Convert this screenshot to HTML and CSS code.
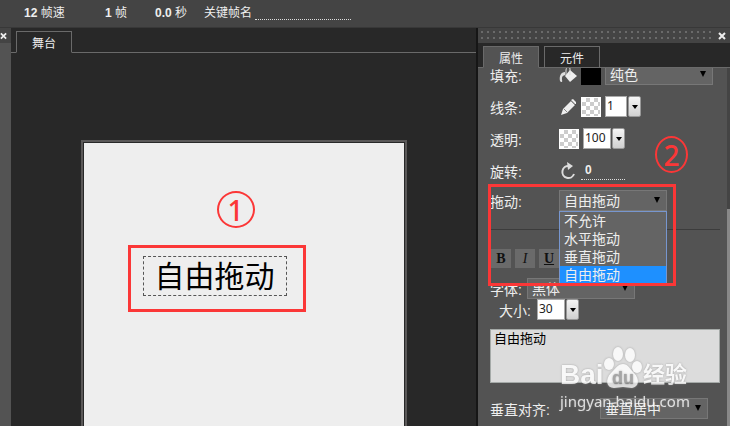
FILE: index.html
```html
<!DOCTYPE html>
<html lang="zh-CN">
<head>
    <meta charset="UTF-8">
    <meta name="viewport" content="width=device-width, initial-scale=1.0">
    <title>舞台</title>
    <link rel="stylesheet" href="styles.css">
</head>
<body>
    <header class="timeline-bar">
        <p><b>12</b> 帧速</p>
        <p><b>1</b> 帧</p>
        <p><b>0.0</b> 秒</p>
        <div class="frame-name">
            <label for="frameName">关键帧名</label>
            <input id="frameName" type="text">
        </div>
    </header>

    <div class="workspace">
        <aside class="side-strip">
            <button class="close-button" aria-label="关闭">
                <svg width="8" height="8" viewBox="0 0 8 8"><path d="M1 1l6 6M7 1L1 7"/></svg>
            </button>
        </aside>

        <main class="stage">
            <nav class="tabs stage-tabs">
                <button class="tab">舞台</button>
            </nav>
            <div class="paper">
                <div class="text-object">自由拖动</div>
                <div class="mark-box mark-text"></div>
                <div class="mark-circle mark-one">1</div>
            </div>
        </main>

        <aside class="panel">
            <div class="panel-handle">
                <button class="close-button" aria-label="关闭">
                    <svg width="8" height="8" viewBox="0 0 8 8"><path d="M1 1l6 6M7 1L1 7"/></svg>
                </button>
            </div>
            <nav class="tabs panel-tabs">
                <button class="tab active">属性</button>
                <button class="tab">元件</button>
            </nav>

            <div class="panel-body">
                <form class="properties">
                    <div class="row">
                        <label for="fill">填充:</label>
                        <svg class="icon" width="18" height="18" viewBox="0 0 18 18">
                            <path d="M11 4l7 6-7 6-5-6z" fill="#eee"/>
                            <path d="M11 9V3c0-3-4-2-4 1v5" fill="none" stroke="#ddd"/>
                            <path d="M6 6C2 6 0 10 1 15c1 2 3 1 2-1 0-3 0-4 3-5z" fill="#ddd"/>
                        </svg>
                        <span class="swatch black"></span>
                        <div class="select">
                            <select id="fill"><option>纯色</option></select>
                        </div>
                    </div>
                    <div class="row">
                        <label for="line">线条:</label>
                        <svg class="icon" width="18" height="18" viewBox="0 0 18 18">
                            <path d="M2 17l2-6 8-8 4 4-8 8zM12 2l2-1 3 3v2l-1 0z" fill="#eee"/>
                            <path d="M12 3l4 4M5 11l3 3" stroke="#888" stroke-width="1"/>
                        </svg>
                        <span class="swatch checker"></span>
                        <div class="combo">
                            <input id="line" class="short" type="text" value="1">
                            <button type="button" aria-label="线条"></button>
                        </div>
                    </div>
                    <div class="row">
                        <label for="alpha">透明:</label>
                        <span class="swatch checker"></span>
                        <div class="combo">
                            <input id="alpha" type="text" value="100">
                            <button type="button" aria-label="透明"></button>
                        </div>
                    </div>
                    <div class="row tight">
                        <label for="rotate">旋转:</label>
                        <svg class="icon" width="18" height="18" viewBox="0 0 18 18">
                            <path d="M10 4A6 6 0 1 0 15 12" fill="none" stroke="#ddd" stroke-width="2"/>
                            <path d="M8 0l6 4-5 4z" fill="#ddd"/>
                        </svg>
                        <input id="rotate" class="rotate" type="text" value="0">
                    </div>
                    <div class="row drag-row">
                        <label for="drag">拖动:</label>
                        <div class="select">
                            <select id="drag"><option>自由拖动</option></select>
                            <ul class="options">
                                <li>不允许</li>
                                <li>水平拖动</li>
                                <li>垂直拖动</li>
                                <li class="selected">自由拖动</li>
                            </ul>
                        </div>
                        <div class="mark-box mark-drag"></div>
                        <div class="mark-circle mark-two">2</div>
                    </div>

                    <hr>

                    <div class="format-buttons">
                        <button type="button"><b>B</b></button>
                        <button type="button" class="italic"><i>I</i></button>
                        <button type="button"><u>U</u></button>
                    </div>
                    <div class="row font-row">
                        <label for="font">字体:</label>
                        <div class="select">
                            <select id="font"><option>黑体</option></select>
                        </div>
                    </div>
                    <div class="row size-row">
                        <label for="size">大小:</label>
                        <div class="combo">
                            <input id="size" type="text" value="30">
                            <button type="button" aria-label="大小"></button>
                        </div>
                    </div>
                    <textarea aria-label="文本">自由拖动</textarea>
                    <div class="row align-row">
                        <label for="valign">垂直对齐:</label>
                        <div class="select">
                            <select id="valign"><option>垂直居中</option></select>
                        </div>
                    </div>

                    <div class="watermark">
                        <div class="watermark-logo">
                            <span class="bai">Bai</span>
                            <span class="paw">
                                <svg width="40" height="42" viewBox="0 0 40 42">
                                    <ellipse cx="6" cy="17" rx="5" ry="6"/>
                                    <ellipse cx="15" cy="7" rx="5" ry="7"/>
                                    <ellipse cx="27" cy="8" rx="5" ry="7"/>
                                    <ellipse cx="34" cy="20" rx="5" ry="6"/>
                                    <path d="M20 17c5 0 7 5 11 9 6 6 5 14-2 15-3 0-6-1-9-1s-6 1-9 1c-8 0-9-9-3-15 4-4 7-9 12-9z"/>
                                </svg>
                                <span class="du">du</span>
                            </span>
                            <span class="jingyan">经验</span>
                        </div>
                        <div class="watermark-url">jingyan.baidu.com</div>
                    </div>
                </form>
                <div class="scrollbar"><div class="thumb"></div></div>
            </div>
        </aside>
    </div>
</body>
</html>
```
FILE: styles.css
```css
:root {
    --bar: #444444;
    --stage: #282828;
    --panel: #535353;
    --line: #6a6a6a;
    --field: #646464;
    --text: #eeeeee;
    --mark: #fb3737;
}

* {
    margin: 0;
    padding: 0;
    box-sizing: border-box;
}

body {
    display: flex;
    flex-direction: column;
    height: 100vh;
    overflow: hidden;
    background-color: var(--stage);
    color: var(--text);
    font-family: "Liberation Sans", "Noto Sans CJK SC", sans-serif;
    font-size: 12px;
}

button, input, select, textarea {
    font: inherit;
    color: inherit;
    border: none;
    outline: none;
    border-radius: 0;
}

/* top bar */
.timeline-bar {
    display: grid;
    grid-template-columns: 81px 50px 49px auto;
    align-items: center;
    height: 28px;
    padding: 0 0 4px 24px;
    background-color: var(--bar);
    border-bottom: 1px solid #383838;
}

.frame-name {
    display: flex;
    gap: 3px;
}

.frame-name input {
    width: 96px;
    background: none;
    border-bottom: 1px dotted #ddd;
}

.workspace {
    display: flex;
    flex: 1;
    min-height: 0;
}

.side-strip {
    width: 11px;
    background-color: var(--panel);
}

.close-button {
    display: flex;
    align-items: center;
    justify-content: center;
    height: 15px;
    background-color: var(--bar);
}

.close-button path {
    stroke: #eee;
    stroke-width: 2;
}

.side-strip .close-button {
    width: 100%;
    padding-right: 4px;
}

/* tabs */
.tabs {
    display: flex;
    align-items: flex-end;
    gap: 5px;
    height: 25px;
    padding-left: 5px;
    border-bottom: 1px solid var(--line);
    background-color: var(--stage);
}

.tab {
    width: 56px;
    height: 22px;
    margin-bottom: -1px;
    border: 1px solid var(--line);
    background-color: var(--stage);
}

.tab.active {
    background-color: var(--panel);
    border-bottom-color: var(--panel);
}

.stage-tabs .tab {
    border-bottom-color: var(--stage);
}

/* stage */
.stage {
    display: flex;
    flex-direction: column;
    flex: 1;
}

.paper {
    position: relative;
    flex: 1;
    width: 326px;
    margin: 87px auto 0;
    border: 2px solid #5a5858;
    border-bottom: none;
    background-color: #eee;
    box-shadow: inset 0 1px #282828, inset 1px 0 #282828, inset -1px 0 #282828;
}

.text-object {
    position: absolute;
    left: 60px;
    top: 114px;
    width: 144px;
    height: 40px;
    border: 1px dashed #555;
    color: #000;
    font-size: 30px;
    line-height: 40px;
    text-align: center;
}

.mark-box {
    position: absolute;
    border: 3px solid var(--mark);
}

.mark-text {
    left: 45px;
    top: 103px;
    width: 178px;
    height: 67px;
}

.mark-circle {
    position: absolute;
    height: 37px;
    border: 2px solid var(--mark);
    border-radius: 50%;
    color: var(--mark);
    font-family: "Noto Sans", sans-serif;
    font-size: 28px;
    font-weight: 500;
    line-height: 34px;
    text-align: center;
}

.mark-one {
    left: 134px;
    top: 49px;
    width: 38px;
}

/* properties panel */
.panel {
    display: flex;
    flex-direction: column;
    width: 254px;
    border-left: 2px solid #161616;
}

.panel-handle {
    display: flex;
    justify-content: flex-end;
    height: 15px;
    padding-left: 3px;
    background:
        linear-gradient(#444 3px, transparent 3px 5px, #444 5px 9px, transparent 9px 11px, #444 11px),
        repeating-linear-gradient(90deg, #444 0 3px, #6a6a6a 3px 5px, #444 5px 6px);
}

.panel-handle .close-button {
    width: 16px;
}

.panel-body {
    display: flex;
    flex: 1;
    min-height: 0;
    overflow: hidden;
    background-color: var(--panel);
}

.properties {
    position: relative;
    flex: 1;
    margin-top: -4px;
    padding: 0 7px 0 12px;
    font-size: 14px;
}

.scrollbar {
    width: 3px;
    padding-top: 141px;
    background-color: #444;
}

.thumb {
    height: 100%;
    background-color: #888;
}

.row {
    display: flex;
    align-items: center;
    gap: 4px;
    height: 21px;
    margin-bottom: 11px;
}

.row label {
    width: 65px;
    white-space: nowrap;
}

.row.tight {
    margin-bottom: 9px;
}

.icon {
    flex: none;
}

.swatch {
    width: 20px;
    height: 20px;
}

.black {
    background-color: #000;
}

.checker {
    background: repeating-conic-gradient(#ccc 0 25%, #fff 0 50%) 0 0 / 8px 8px;
    border: 1px solid #fff;
}

.select {
    position: relative;
    width: 108px;
    height: 21px;
}

.select select {
    appearance: none;
    width: 100%;
    height: 100%;
    padding: 1px 0 0 4px;
    border: 1px solid #777;
    background-color: var(--field);
}

.select::after {
    content: "";
    position: absolute;
    right: 7px;
    top: 7px;
    border: 3px solid transparent;
    border-top: 6px solid #000;
    border-bottom: none;
}

.combo {
    display: flex;
    gap: 1px;
    height: 21px;
    color: #222;
    font-size: 12px;
}

.combo input {
    width: 28px;
    padding: 0 1px 2px;
    border: 1px solid #aaa;
    background-color: #fff;
    font-family: "Noto Sans", sans-serif;
}

.combo .short {
    width: 22px;
}

.combo button {
    display: flex;
    align-items: center;
    justify-content: center;
    width: 13px;
    border: 1px solid #999;
    border-radius: 2px;
    background: linear-gradient(#f5f5f5, #d0d0d0);
}

.combo button::after {
    content: "";
    border: 3px solid transparent;
    border-top: 4px solid #000;
    border-bottom: none;
}

.rotate {
    width: 44px;
    height: 18px;
    padding-left: 4px;
    border-bottom: 1px dotted #ddd;
    background: none;
    font-size: 12px;
    font-weight: bold;
}

.drag-row {
    position: relative;
    z-index: 1;
    margin-bottom: 18px;
}

.options {
    position: absolute;
    left: 0;
    top: 21px;
    width: 100%;
    border: 1px solid #7796cf;
    background-color: var(--field);
    list-style: none;
}

.options li {
    height: 18px;
    padding-left: 4px;
    line-height: 18px;
}

.options .selected {
    background-color: #1e90ff;
}

.mark-drag {
    left: -2px;
    top: -6px;
    width: 188px;
    height: 102px;
}

.mark-two {
    left: 165px;
    top: -54px;
    width: 33px;
}

hr {
    border: none;
    border-top: 1px solid #3c3c3c;
}

.format-buttons {
    display: flex;
    gap: 4px;
    margin: 19px 0 10px 1px;
}

.format-buttons button {
    width: 20px;
    height: 19px;
    background-color: var(--line);
    color: #111;
    font: bold 14px "Liberation Serif", serif;
}

.format-buttons .italic {
    font-weight: normal;
}

.font-row {
    margin-bottom: 0;
}

.font-row label {
    width: 33px;
}

.size-row {
    margin-bottom: 9px;
    padding-left: 9px;
}

.size-row label {
    width: 34px;
}

textarea {
    display: block;
    width: 100%;
    height: 54px;
    padding: 1px 3px;
    border: 1px solid #a5aaa8;
    background-color: #dcdcdc;
    color: #000;
    font-size: 13px;
    line-height: 16px;
    resize: none;
}

.align-row {
    margin-top: 15px;
}

.align-row label {
    width: 106px;
}

/* watermark */
.watermark {
    position: absolute;
    left: 82px;
    top: 283px;
    color: #fff;
    opacity: 0.8;
    text-shadow: 0 0 2px #888;
    pointer-events: none;
}

.watermark-logo {
    display: flex;
    align-items: flex-end;
    height: 42px;
}

.bai {
    width: 43px;
    font: bold 28px/28px "Liberation Sans", sans-serif;
}

.paw {
    position: relative;
    width: 40px;
    height: 42px;
    fill: #fff;
    filter: drop-shadow(0 0 1px #999);
}

.du {
    position: absolute;
    left: 0;
    bottom: 0;
    width: 100%;
    color: #999;
    font: bold 18px/22px "Liberation Sans", sans-serif;
    text-align: center;
}

.jingyan {
    font-size: 22px;
    font-weight: bold;
    line-height: 28px;
}

.watermark-url {
    font: 15px/24px "Noto Sans", sans-serif;
}
```
